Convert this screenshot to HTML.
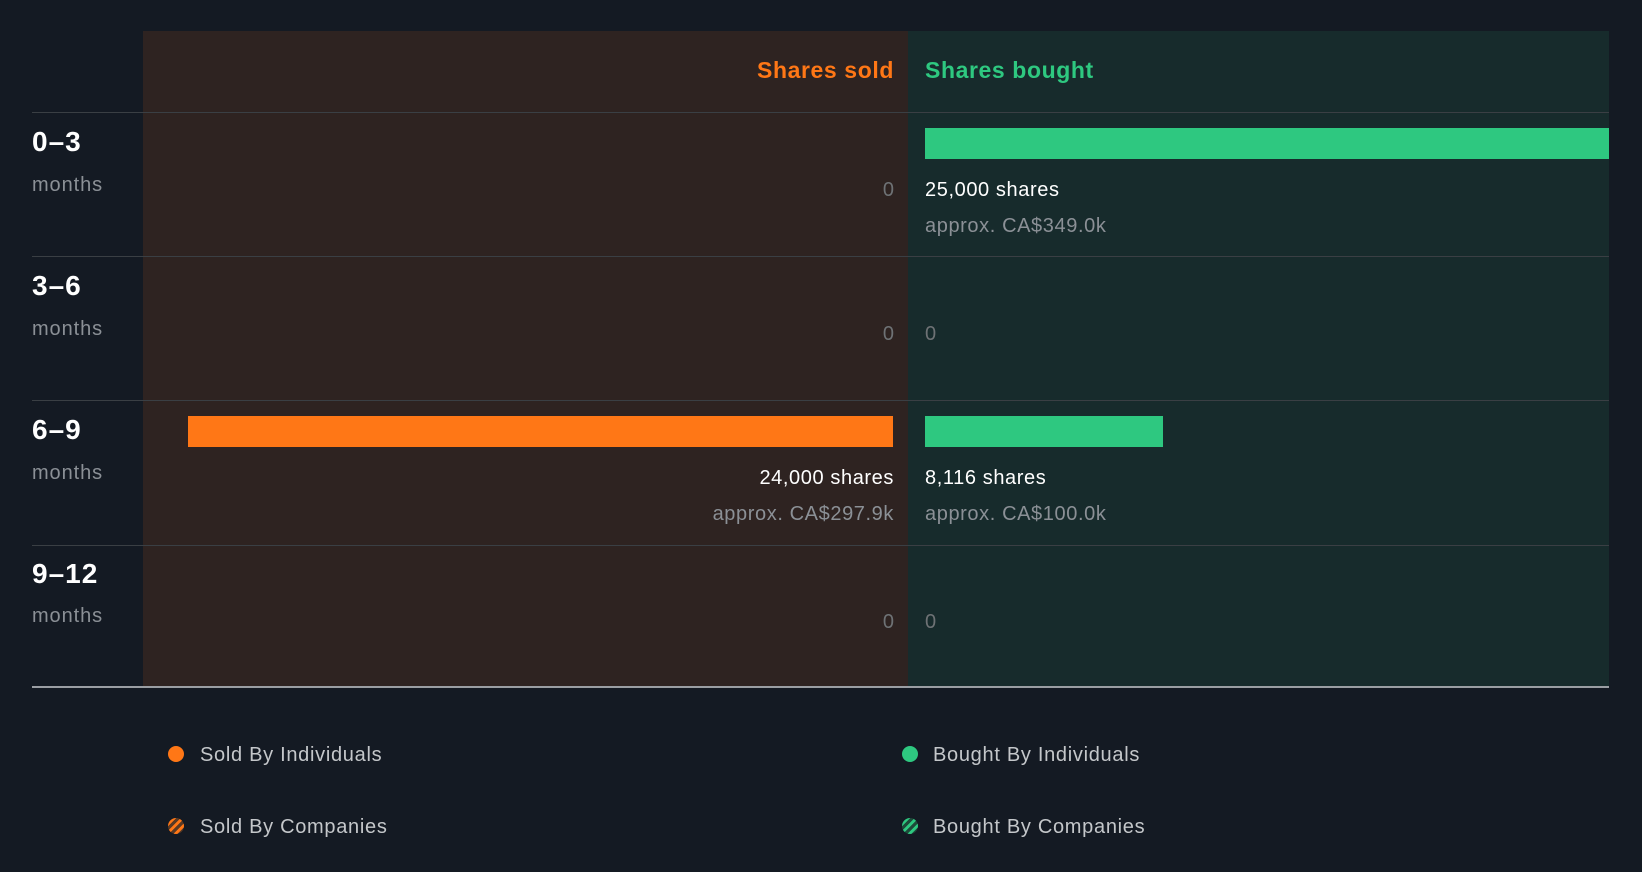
<!DOCTYPE html>
<html><head><style>
body{margin:0;width:1642px;height:872px;background:#141a23;font-family:"Liberation Sans",sans-serif;position:relative;overflow:hidden}
div{position:absolute}
.t{white-space:nowrap}
.r{text-align:right}
.lbl{left:32px;color:#fff;font-weight:bold;font-size:28px;letter-spacing:1px}
.mo{left:32px;color:#8b9096;font-size:20px;letter-spacing:0.9px}
.w{color:#fff;font-size:20px;letter-spacing:0.6px}
.g{color:#8b9096;font-size:20px;letter-spacing:0.6px}
.z{color:#6e7275;font-size:20px}
.line{left:32px;width:1577px;height:1px;background:#3a3f44}
.leg{color:#c4c7ca;font-size:20px;letter-spacing:0.7px}
.dot{width:16px;height:16px;border-radius:50%}
</style></head><body>
<div style="left:143px;top:31px;width:765px;height:656px;background:#2e2321"></div>
<div style="left:908px;top:31px;width:701px;height:656px;background:#172b2c"></div>
<div class="t r" style="right:748px;top:57px;color:#ff7716;font-weight:bold;font-size:23px;letter-spacing:0.6px">Shares sold</div>
<div class="t" style="left:925px;top:57px;color:#2ec880;font-weight:bold;font-size:23px;letter-spacing:0.6px">Shares bought</div>
<div class="line" style="top:112px"></div>
<div class="line" style="top:256px"></div>
<div class="line" style="top:400px"></div>
<div class="line" style="top:545px"></div>
<div style="left:32px;top:686px;width:1577px;height:2px;background:#9a9ea3"></div>

<div class="t lbl" style="top:126px">0–3</div><div class="t mo" style="top:174px">months</div>
<div class="t lbl" style="top:270px">3–6</div><div class="t mo" style="top:318px">months</div>
<div class="t lbl" style="top:414px">6–9</div><div class="t mo" style="top:462px">months</div>
<div class="t lbl" style="top:558px">9–12</div><div class="t mo" style="top:605px">months</div>

<div style="left:925px;top:128px;width:684px;height:31px;background:#2ec880"></div>
<div class="t z r" style="right:748px;top:179px">0</div>
<div class="t w" style="left:925px;top:179px">25,000 shares</div>
<div class="t g" style="left:925px;top:215px">approx. CA$349.0k</div>

<div class="t z r" style="right:748px;top:323px">0</div>
<div class="t z" style="left:925px;top:323px">0</div>

<div style="left:188px;top:416px;width:705px;height:31px;background:#ff7716"></div>
<div style="left:925px;top:416px;width:238px;height:31px;background:#2ec880"></div>
<div class="t w r" style="right:748px;top:467px">24,000 shares</div>
<div class="t g r" style="right:748px;top:503px">approx. CA$297.9k</div>
<div class="t w" style="left:925px;top:467px">8,116 shares</div>
<div class="t g" style="left:925px;top:503px">approx. CA$100.0k</div>

<div class="t z r" style="right:748px;top:611px">0</div>
<div class="t z" style="left:925px;top:611px">0</div>

<div class="dot" style="left:168px;top:746px;background:#ff7716"></div>
<div class="t leg" style="left:200px;top:744px">Sold By Individuals</div>
<div class="dot" style="left:902px;top:746px;background:#2ec880"></div>
<div class="t leg" style="left:933px;top:744px">Bought By Individuals</div>
<div class="dot" style="left:168px;top:818px;background:repeating-linear-gradient(135deg,#5a3a25 0 3px,#ff7716 3px 6px)"></div>
<div class="t leg" style="left:200px;top:816px">Sold By Companies</div>
<div class="dot" style="left:902px;top:818px;background:repeating-linear-gradient(135deg,#1e4a3a 0 3px,#2ec880 3px 6px)"></div>
<div class="t leg" style="left:933px;top:816px">Bought By Companies</div>
</body></html>
